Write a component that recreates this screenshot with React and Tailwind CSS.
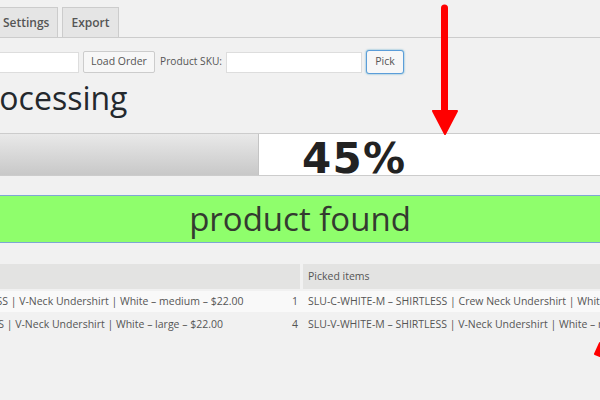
export default function App() {
  const rows = [
    {
      item: "SLU-V-WHITE-M – SHIRTLESS | V-Neck Undershirt | White – medium – $22.00",
      qty: 1,
      picked: "SLU-C-WHITE-M – SHIRTLESS | Crew Neck Undershirt | White – medium – $22.00",
      bg: "bg-[#f9f9f9]",
    },
    {
      item: "SLU-V-WHITE-L – SHIRTLESS | V-Neck Undershirt | White – large – $22.00",
      qty: 4,
      picked: "SLU-V-WHITE-M – SHIRTLESS | V-Neck Undershirt | White – medium – $22.00",
      bg: "bg-[#f1f1f1]",
    },
  ];

  return (
    <div className="relative w-[600px] h-[400px] overflow-hidden bg-[#f1f1f1] font-['Open_Sans',sans-serif] text-[#555]">
      {/* Tabs */}
      <div className="pt-[7px] border-b border-[#ccc] flex gap-[4px] ml-[-6px]">
        <div className="h-[30px] px-2 flex items-center bg-[#e5e5e5] border border-b-0 border-[#ccc] text-[12px] font-semibold">
          Settings
        </div>
        <div className="h-[30px] px-2 flex items-center bg-[#e5e5e5] border border-b-0 border-[#ccc] text-[12px] font-semibold">
          Export
        </div>
      </div>

      {/* Order / SKU inputs */}
      <div className="mt-[12px] h-[24px] flex items-center gap-[4px] text-[10.2px]">
        <input className="w-[79px] h-[21px] bg-white border border-[#ddd] border-l-0 outline-none" />
        <button className="w-[72px] h-[22px] bg-[#f7f7f7] border border-[#ccc] rounded-[2px] text-[#555] text-[10.5px]">
          Load Order
        </button>
        <span className="ml-[1px]">Product SKU:</span>
        <input className="w-[136px] h-[21px] bg-white border border-[#ddd] outline-none" />
        <button className="w-[38px] h-[24px] bg-[#f7f7f7] border border-[#5b9dd9] rounded-[3px] shadow-[0_0_2px_rgba(30,140,190,0.8)] text-[#555] text-[10.5px]">
          Pick
        </button>
      </div>

      {/* Heading */}
      <div className="mt-[3px] h-[41px] overflow-hidden">
        <h1 className="ml-[-33px] text-[32px] leading-[41px] text-[#23282d] whitespace-nowrap">
          Processing
        </h1>
      </div>

      {/* Progress */}
      <div className="relative mt-[15px] h-[43px] flex border-y border-[#ccc] bg-white">
        <div className="w-[259px] h-full border-r border-[#c4c4c4] bg-gradient-to-b from-[#e9e9e9] to-[#c8c8c8]" />
        <span className="absolute top-[4px] left-[302px] text-[42px] leading-[42px] font-bold tracking-[0.03em] text-[#222] font-['DejaVu_Sans',sans-serif]">
          45%
        </span>
      </div>

      {/* Status */}
      <div className="mt-[19px] h-[48px] flex items-center justify-center bg-[#8ffe6c] border-y border-[#7ea6d4]">
        <span className="text-[33px] leading-none text-[#343a30] mt-[-2px]">product found</span>
      </div>

      {/* Items table */}
      <div className="mt-[21px] flex flex-col gap-[2px] text-[10.5px]">
        <div className="h-[25px] flex gap-[3px]">
          <div className="w-[300px] bg-[#e3e3e2]" />
          <div className="flex-1 bg-[#e3e3e2] flex items-center pl-[5px]">Picked items</div>
        </div>
        {rows.map((r) => (
          <div key={r.qty} className={`h-[21px] flex gap-[3px] ${r.bg}`}>
            <div className="w-[300px] flex items-center overflow-hidden">
              <span className="ml-[-131px] whitespace-nowrap">{r.item}</span>
              <span className="ml-auto pr-[2px]">{r.qty}</span>
            </div>
            <div className="flex-1 flex items-center overflow-hidden pl-[5px] whitespace-nowrap">
              {r.picked}
            </div>
          </div>
        ))}
      </div>

      {/* Annotation arrows */}
      <svg className="absolute left-[430px] top-0" width="30" height="140" viewBox="0 0 30 140">
        <path d="M14.5 8 L14.5 112" stroke="#ff0000" strokeWidth="7" strokeLinecap="round" />
        <path d="M3 111 L27 111 L15 134 Z" fill="#ff0000" stroke="#ff0000" strokeWidth="2" strokeLinejoin="round" />
      </svg>
      <svg className="absolute left-[590px] top-[340px]" width="10" height="20" viewBox="0 0 10 20">
        <path d="M10 3 L5 14 L10 16 Z" fill="#ff0000" stroke="#ff0000" strokeWidth="2" strokeLinejoin="round" />
      </svg>
    </div>
  );
}
